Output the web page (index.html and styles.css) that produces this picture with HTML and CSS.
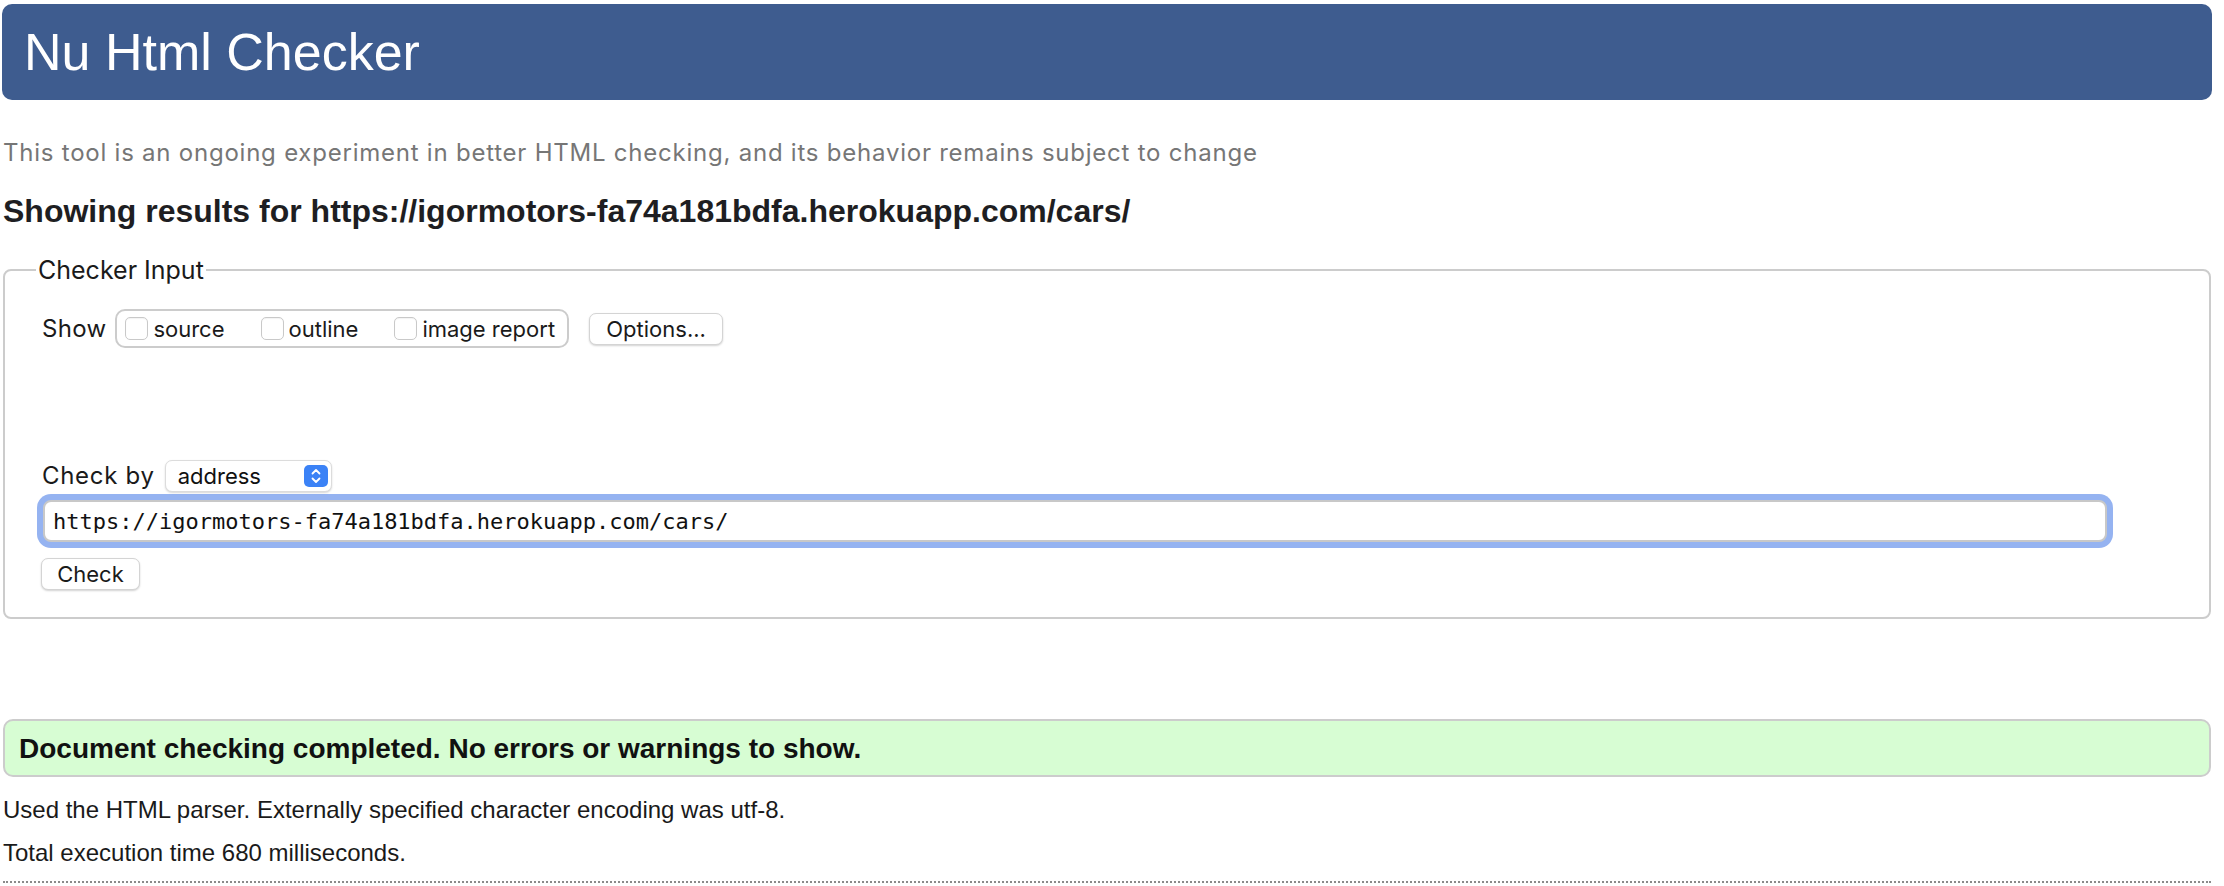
FILE: index.html
```html
<!DOCTYPE html>
<html lang="en">
<head>
<meta charset="utf-8">
<title>Nu Html Checker</title>
<link rel="stylesheet" href="styles.css">
</head>
<body>
<div class="page">
  <header class="banner"><h1 class="banner-title">Nu Html Checker</h1></header>
  <p class="lede">This tool is an ongoing experiment in better HTML checking, and its behavior remains subject to change</p>
  <h2 class="results-for">Showing results for https://igormotors-fa74a181bdfa.herokuapp.com/cars/</h2>
  <fieldset class="checker">
    <legend class="checker-legend">Checker Input</legend>
    <div class="show-row">
      <span class="row-label">Show</span>
      <div class="show-group">
        <label class="opt"><input type="checkbox" class="cb"><span>source</span></label>
        <label class="opt"><input type="checkbox" class="cb"><span>outline</span></label>
        <label class="opt"><input type="checkbox" class="cb"><span>image report</span></label>
      </div>
      <button type="button" class="btn btn-options">Options...</button>
    </div>
    <div class="checkby-row">
      <span class="row-label row-label-wide">Check by</span>
      <div class="select">
        <span class="select-text">address</span>
        <span class="stepper">
          <svg width="24" height="22" viewBox="0 0 24 22"><path d="M8.5 8.5 L12 5 L15.5 8.5" fill="none" stroke="#fff" stroke-width="1.8" stroke-linecap="round" stroke-linejoin="round"/><path d="M8.5 13.5 L12 17 L15.5 13.5" fill="none" stroke="#fff" stroke-width="1.8" stroke-linecap="round" stroke-linejoin="round"/></svg>
        </span>
      </div>
    </div>
    <input class="url" type="text" value="https://igormotors-fa74a181bdfa.herokuapp.com/cars/">
    <div class="check-row"><button type="button" class="btn btn-check">Check</button></div>
  </fieldset>
  <div class="success"><p class="success-text">Document checking completed. No errors or warnings to show.</p></div>
  <p class="info info-first">Used the HTML parser. Externally specified character encoding was utf-8.</p>
  <p class="info info-second">Total execution time 680 milliseconds.</p>
  <hr class="rule">
</div>
</body>
</html>
```
FILE: styles.css
```css
html, body {
  margin: 0;
  padding: 0;
  background: #ffffff;
}
body {
  font-family: "Liberation Sans", Arial, sans-serif;
  color: #111;
}
.page {
  padding: 0 13px 0 3px;
}
.banner {
  margin: 4px -1px 0 -1px;
  height: 96px;
  background: #3e5c8f;
  border-radius: 10px;
  display: flex;
  align-items: center;
}
.banner-title {
  margin: 0 0 0 22px;
  font-family: "Liberation Sans", Arial, sans-serif;
  font-weight: normal;
  font-size: 52px;
  line-height: 60px;
  color: #ffffff;
}
.lede {
  margin: 38px 0 0 0;
  font-family: Inter, "Liberation Sans", sans-serif;
  font-size: 24px;
  letter-spacing: 0.77px;
  line-height: 30px;
  color: #767676;
}
.results-for {
  margin: 25px 0 0 0;
  font-family: "Liberation Sans", Arial, sans-serif;
  font-weight: bold;
  font-size: 32px;
  line-height: 36px;
  color: #1e1e22;
}
.checker {
  margin: 27px 0 0 0;
  padding: 0 12px 27px 36px;
  border: 2px solid #cccccc;
  border-radius: 8px;
  min-width: 0;
}
.checker-legend {
  margin-left: -5px;
  padding: 0 2px;
  font-family: Inter, "Liberation Sans", sans-serif;
  font-size: 25px;
  line-height: 28px;
  color: #1a1a1a;
}
.show-row {
  margin-top: 25px;
  display: flex;
  align-items: center;
}
.row-label {
  font-family: Inter, "Liberation Sans", sans-serif;
  font-size: 24px;
  letter-spacing: 0.3px;
  line-height: 28px;
  color: #1a1a1a;
  margin-left: 1px;
}
.row-label-wide {
  letter-spacing: 0.7px;
}
.show-group {
  margin-left: 9px;
  height: 35px;
  border: 2px solid #cccccc;
  border-radius: 10px;
  display: flex;
  align-items: center;
  padding: 0 12px 0 8px;
  gap: 36px;
}
.opt {
  display: flex;
  align-items: center;
  gap: 5px;
  font-family: Inter, "Liberation Sans", sans-serif;
  font-size: 22px;
  color: #1a1a1a;
}
.cb {
  appearance: none;
  -webkit-appearance: none;
  margin: 0;
  width: 23px;
  height: 23px;
  border: 1px solid #c9c9c9;
  border-radius: 5px;
  background: #ffffff;
  box-shadow: inset 0 1px 1px rgba(0,0,0,0.05);
}
.btn {
  font-family: Inter, "Liberation Sans", sans-serif;
  font-size: 22px;
  color: #1a1a1a;
  background: #ffffff;
  border: 1px solid #d4d4d4;
  border-radius: 7px;
  box-shadow: 0 1px 2px rgba(0,0,0,0.18);
  padding: 0;
  height: 32px;
}
.btn-options {
  margin-left: 20px;
  width: 134px;
}
.checkby-row {
  margin-top: 112px;
  display: flex;
  align-items: center;
}
.select {
  margin-left: 10px;
  width: 167px;
  height: 32px;
  box-sizing: border-box;
  background: #ffffff;
  border: 1px solid #dcdcdc;
  border-radius: 7px;
  box-shadow: 0 1px 2px rgba(0,0,0,0.16);
  display: flex;
  align-items: center;
  justify-content: space-between;
  padding: 0 3px 0 12px;
}
.select-text {
  font-family: Inter, "Liberation Sans", sans-serif;
  font-size: 22px;
  color: #111;
}
.stepper {
  width: 24px;
  height: 22px;
  border-radius: 5px;
  background: #3b82f6;
  display: flex;
}
.url {
  display: block;
  margin: 8px 0 0 2px;
  width: 2064px;
  height: 42px;
  box-sizing: border-box;
  border: 2px solid #c8c8c8;
  border-radius: 8px;
  box-shadow: 0 0 0 6px #95b3f1;
  outline: none;
  padding: 0 8px;
  font-family: "DejaVu Sans Mono", "Liberation Mono", monospace;
  font-size: 22px;
  color: #111;
  background: #ffffff;
}
.check-row {
  margin-top: 16px;
  margin-left: 0;
}
.btn-check {
  width: 99px;
}
.success {
  margin-top: 100px;
  border: 2px solid #cccccc;
  border-radius: 10px;
  background: #d7fdd3;
  padding: 13px 16px 11px 14px;
}
.success-text {
  margin: 0;
  font-family: "Liberation Sans", Arial, sans-serif;
  font-weight: bold;
  font-size: 28px;
  line-height: 30px;
  color: #111;
}
.info {
  margin: 0;
  font-family: "Liberation Sans", Arial, sans-serif;
  font-size: 24px;
  line-height: 28px;
  color: #1a1a1a;
}
.info-first {
  margin-top: 19px;
}
.info-second {
  margin-top: 15px;
}
.rule {
  margin: 14px 0 0 0;
  border: 0;
  border-top: 2px dotted #8a8a8a;
  height: 0;
}
```
